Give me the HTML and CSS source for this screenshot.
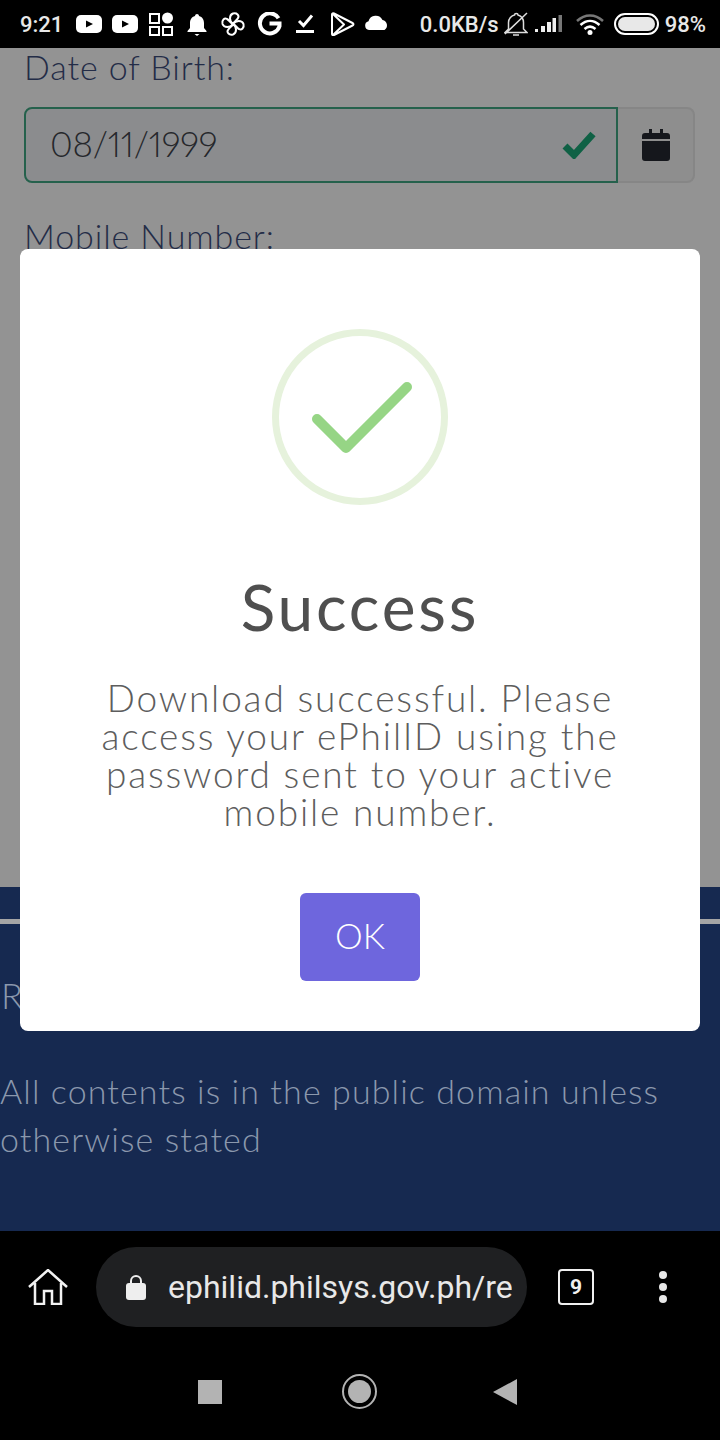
FILE: index.html
```html
<!DOCTYPE html>
<html lang="en">
<head>
  <meta charset="UTF-8">
  <meta name="viewport" content="width=device-width, initial-scale=1.0">
  <title>ePhilID - Success</title>
  <link rel="stylesheet" href="styles.css">
</head>
<body>
  <div class="status-bar">
    <div class="status-left">
      <span class="time">9:21</span>
      <svg class="status-icon" viewBox="0 0 36 24"><rect x="5" y="3" width="26" height="18" rx="5" fill="#fff"/><path d="M15 8.500l7 3.500-7 3.500z" fill="#000"/></svg>
      <svg class="status-icon" viewBox="0 0 36 24"><rect x="5" y="3" width="26" height="18" rx="5" fill="#fff"/><path d="M15 8.500l7 3.500-7 3.500z" fill="#000"/></svg>
      <svg class="status-icon" viewBox="0 0 36 24"><g fill="none" stroke="#fff" stroke-width="2"><rect x="7" y="2" width="9" height="9"/><rect x="7" y="15" width="9" height="8"/><rect x="20" y="15" width="9" height="8"/></g><circle cx="24.500" cy="6" r="5.500" fill="#fff"/></svg>
      <svg class="status-icon" viewBox="0 0 36 24"><path d="M18 2c1 0 2 .8 2 2 3.500 1 5 4 5 7v5l2.500 3v1h-19v-1l2.500-3v-5c0-3 1.500-6 5-7 0-1.200 1-2 2-2z" fill="#fff"/><path d="M15.500 22h5l-2.500 2z" fill="#fff"/></svg>
      <svg class="status-icon" viewBox="0 0 36 24">
        <g fill="none" stroke="#fff" stroke-width="2" stroke-linejoin="round">
          <path d="M18 12C14 9 14 3 18 1.500c4-1 6.500 2 5 4.500-1 2-3.500 3-5 6z"/>
          <path d="M18 12C14 9 14 3 18 1.500c4-1 6.500 2 5 4.500-1 2-3.500 3-5 6z" transform="rotate(90 18 12)"/>
          <path d="M18 12C14 9 14 3 18 1.500c4-1 6.500 2 5 4.500-1 2-3.500 3-5 6z" transform="rotate(180 18 12)"/>
          <path d="M18 12C14 9 14 3 18 1.500c4-1 6.500 2 5 4.500-1 2-3.500 3-5 6z" transform="rotate(270 18 12)"/>
        </g>
      </svg>
      <svg class="status-icon" viewBox="0 0 36 24"><path d="M27.500 6.200A10 10 0 1 0 28.500 14.200V11.500H18.500" fill="none" stroke="#fff" stroke-width="4"/></svg>
      <svg class="status-icon" viewBox="0 0 36 24"><path d="M12 9l4.500 4.500L25 3.500" fill="none" stroke="#fff" stroke-width="3"/><rect x="9" y="18" width="18" height="3" fill="#fff"/></svg>
      <svg class="status-icon" viewBox="0 0 36 24"><path d="M9 2.500c0-1 1-1.500 2-1l18.500 9.500c1.300.7 1.300 1.800 0 2.500L11 23c-1 .5-2 0-2-1zM10 2l11 10.500L10 23" fill="none" stroke="#fff" stroke-width="2" stroke-linejoin="round"/></svg>
      <svg class="status-icon" viewBox="0 0 36 24"><path d="M10 18a4.500 4.500 0 0 1-.5-8.800 7.500 7.500 0 0 1 14-1.200 5.500 5.500 0 0 1 2 10z" fill="#fff"/></svg>
    </div>
    <div class="status-right">
      <span class="net-speed">0.0KB/s</span>
      <svg class="bell-off" viewBox="0 0 24 24"><path d="M1 20.500l3.500-3.500V10.500C4.500 6.500 7.500 3.500 10.500 3c0-2 3.500-2 3.500 0 3 1 5.500 3.500 5.500 7.500V17l3.500 3.500zM9 23h6M1 22L23 1" fill="none" stroke="#ddd" stroke-width="1.500"/></svg>
      <svg class="signal" viewBox="0 0 28 20"><rect x="1" y="15" width="3" height="3" fill="#eee"/><rect x="7" y="12" width="4" height="6" fill="#eee"/><rect x="13" y="8" width="4" height="10" fill="#eee"/><rect x="18.500" y="4" width="3.500" height="14" fill="#eee"/><rect x="24.500" y="1" width="3.500" height="17" fill="#777"/></svg>
      <svg class="wifi" viewBox="0 0 28 24"><path d="M1 9c8-7.500 18-7.500 26 0" fill="none" stroke="#777" stroke-width="2.500"/><path d="M4.500 13c6-5.500 13-5.500 19 0M8.500 17c3.500-3 7.500-3 11 0" fill="none" stroke="#fff" stroke-width="2.500"/><circle cx="14" cy="20.500" r="2.500" fill="#fff"/></svg>
      <div class="battery"><div class="battery-fill"></div></div>
      <span class="battery-pct">98%</span>
    </div>
  </div>

  <div class="page">
    <div class="form-area">
      <label class="field-label">Date of Birth:</label>
      <div class="input-group">
        <div class="date-input">
          <span class="date-value">08/11/1999</span>
          <svg class="valid-check" viewBox="0 0 34 28"><path d="M3 15l9 9L31 3" fill="none" stroke="#0f6145" stroke-width="7"/></svg>
        </div>
        <div class="date-addon">
          <svg class="calendar" viewBox="0 0 28 32"><path d="M7 0h3v4H18V0h3v4h4a3 3 0 0 1 3 3v3H0V7a3 3 0 0 1 3-3h4zM0 12h28v17a3 3 0 0 1-3 3H3a3 3 0 0 1-3-3z" fill="#15171c"/></svg>
        </div>
      </div>
      <label class="field-label mobile-label">Mobile Number:</label>
    </div>

    <div class="footer">
      <div class="footer-line"></div>
      <p class="footer-letter">R</p>
      <p class="footer-text">All contents is in the public domain unless otherwise stated</p>
    </div>

    <div class="modal">
      <svg class="success-icon" viewBox="0 0 176 176">
        <circle cx="88" cy="88" r="84.500" fill="none" stroke="#e6f2dc" stroke-width="7"/>
        <path d="M45 90l29 29 61-61" fill="none" stroke="#96d585" stroke-width="10" stroke-linecap="round" stroke-linejoin="round"/>
      </svg>
      <h2 class="modal-title">Success</h2>
      <p class="modal-text">Download successful. Please access your ePhilID using the password sent to your active mobile number.</p>
      <button class="ok-btn">OK</button>
    </div>
  </div>

  <div class="browser-bar">
    <svg class="home-icon" viewBox="0 0 40 36"><path d="M1 18L20 1l19 17M7 14v21h9V22h8v13h9V14" fill="none" stroke="#f2f2f2" stroke-width="2.500"/></svg>
    <div class="url-pill">
      <svg class="lock-icon" viewBox="0 0 22 27"><path d="M6 10V7a5 5 0 0 1 10 0v3" fill="none" stroke="#eee" stroke-width="2"/><rect x="1" y="9" width="20" height="17" rx="3" fill="#eee"/></svg>
      <span class="url-text">ephilid.philsys.gov.ph/re</span>
    </div>
    <div class="tab-count">9</div>
    <div class="menu-dots"><span></span><span></span><span></span></div>
  </div>

  <div class="nav-bar">
    <div class="nav-square"></div>
    <div class="nav-circle"><div></div></div>
    <svg class="nav-back" viewBox="0 0 24 26"><path d="M24 0v26L0 13z" fill="#b3b3b3"/></svg>
  </div>
</body>
</html>
```

FILE: styles.css
```css
* {
  box-sizing: border-box;
}
body {
  margin: 0;
  width: 720px;
  height: 1440px;
  overflow: hidden;
  display: flex;
  flex-direction: column;
  background: #000;
  font-family: Lato, sans-serif;
}

/* status bar */
.status-bar {
  height: 48px;
  flex: none;
  display: flex;
  justify-content: space-between;
  align-items: center;
  background: #000;
  color: #e8e8e8;
  font-family: Roboto, sans-serif;
  font-weight: 500;
  font-size: 22px;
}
.status-left {
  display: flex;
  align-items: center;
}
.time {
  width: 71px;
  padding-left: 20px;
}
.status-icon {
  width: 36px;
  height: 24px;
}
.status-right {
  display: flex;
  align-items: center;
  padding-right: 14px;
}
.net-speed {
  width: 84px;
}
.bell-off {
  width: 24px;
  height: 24px;
  margin-right: 6px;
}
.signal {
  width: 28px;
  height: 20px;
  margin-right: 14px;
}
.wifi {
  width: 28px;
  height: 24px;
  margin-right: 10px;
}
.battery {
  width: 45px;
  height: 22px;
  border: 2px solid #fff;
  border-radius: 11px;
  padding: 2px;
  margin-right: 6px;
}
.battery-fill {
  height: 100%;
  background: #e8e8e8;
  border-radius: 7px;
}

/* page behind the dialog */
.page {
  position: relative;
  height: 1183px;
  flex: none;
  display: flex;
  flex-direction: column;
  background: #939393;
}
.form-area {
  height: 839px;
  flex: none;
  padding: 0 24px;
}
.field-label {
  display: block;
  font-weight: 300;
  font-size: 34px;
  line-height: 38px;
  letter-spacing: 0.9px;
  color: #232c47;
}
.input-group {
  display: flex;
  height: 76px;
  margin-top: 21px;
  width: 671px;
}
.date-input {
  width: 594px;
  display: flex;
  align-items: center;
  justify-content: space-between;
  padding: 0 20px 0 24px;
  border: 2px solid #25614c;
  border-radius: 8px 0 0 8px;
  background: #8b8c8e;
  color: #25272b;
}
.date-value {
  font-weight: 300;
  font-size: 35px;
  font-variant-numeric: proportional-nums;
  letter-spacing: -0.2px;
  padding-bottom: 5px;
}
.valid-check {
  width: 34px;
  height: 28px;
}
.date-addon {
  flex: 1;
  display: flex;
  align-items: center;
  justify-content: center;
  border: 2px solid #868686;
  border-left: none;
  border-radius: 0 8px 8px 0;
  background: #8e8e8e;
}
.calendar {
  width: 28px;
  height: 32px;
}
.mobile-label {
  margin-top: 34px;
}

.footer {
  flex: 1;
  background: #162950;
}
.footer-line {
  height: 5px;
  margin-top: 32px;
  background: #a5a5a5;
}
.footer-letter {
  margin: 47px 0 0;
  padding-left: 1px;
  font-weight: 300;
  font-size: 36px;
  line-height: 48px;
  color: #8b98ad;
}
.footer-text {
  margin: 48px 0 0;
  font-weight: 300;
  font-size: 34px;
  line-height: 48px;
  letter-spacing: 1.1px;
  color: #8b98ad;
}

/* dialog */
.modal {
  position: absolute;
  left: 20px;
  top: 201px;
  width: 680px;
  height: 782px;
  display: flex;
  flex-direction: column;
  align-items: center;
  padding-top: 80px;
  background: #fff;
  border-radius: 8px;
}
.success-icon {
  width: 176px;
  height: 176px;
}
.modal-title {
  margin: 66px 0 0;
  font-weight: 400;
  font-size: 64px;
  line-height: 72px;
  letter-spacing: 2.8px;
  color: #4f4f4f;
}
.modal-text {
  margin: 36px 0 0;
  width: 600px;
  text-align: center;
  font-weight: 300;
  font-size: 37px;
  line-height: 38px;
  letter-spacing: 1.85px;
  color: #5d5d5d;
}
.ok-btn {
  margin-top: 62px;
  width: 120px;
  height: 88px;
  padding: 0 0 4px;
  border: none;
  border-radius: 6px;
  background: #6e66dd;
  color: #fff;
  font-family: Lato, sans-serif;
  font-weight: 300;
  font-size: 35px;
}

/* browser toolbar */
.browser-bar {
  height: 112px;
  flex: none;
  display: flex;
  align-items: center;
  padding-left: 28px;
  background: #000;
}
.home-icon {
  width: 40px;
  height: 36px;
  margin-right: 28px;
}
.url-pill {
  width: 431px;
  height: 80px;
  display: flex;
  align-items: center;
  padding: 0 15px 0 29px;
  border-radius: 40px;
  background: #1f2022;
}
.lock-icon {
  width: 22px;
  height: 27px;
  margin-right: 21px;
  flex: none;
}
.url-text {
  overflow: hidden;
  white-space: nowrap;
  font-family: Roboto, sans-serif;
  font-size: 32px;
  color: #e8e8e8;
}
.tab-count {
  width: 36px;
  height: 36px;
  margin-left: 31px;
  display: flex;
  align-items: center;
  justify-content: center;
  border: 2px solid #f0f0f0;
  border-radius: 4px;
  color: #f0f0f0;
  font-family: Roboto, sans-serif;
  font-weight: 700;
  font-size: 21px;
}
.menu-dots {
  margin-left: 65px;
  display: flex;
  flex-direction: column;
  gap: 4px;
}
.menu-dots span {
  width: 8px;
  height: 8px;
  border-radius: 50%;
  background: #e8e8e8;
}

/* android nav */
.nav-bar {
  flex: 1;
  display: flex;
  align-items: center;
  padding-left: 198px;
  background: #000;
}
.nav-square {
  width: 24px;
  height: 24px;
  background: #b3b3b3;
}
.nav-circle {
  width: 35px;
  height: 35px;
  margin-left: 120px;
  padding: 4px;
  border: 2px solid #b3b3b3;
  border-radius: 50%;
}
.nav-circle div {
  width: 100%;
  height: 100%;
  border-radius: 50%;
  background: #b3b3b3;
}
.nav-back {
  width: 24px;
  height: 26px;
  margin-left: 116px;
}
```
